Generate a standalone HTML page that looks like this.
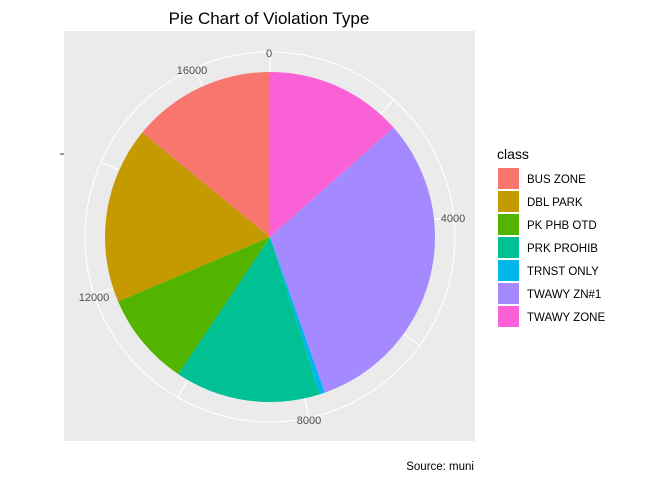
<!DOCTYPE html>
<html><head><meta charset="utf-8"><style>
body{margin:0;background:#fff;width:672px;height:480px;overflow:hidden}
svg{position:absolute;left:0;top:0}
text{font-family:"Liberation Sans",Arial,sans-serif}
</style></head><body>
<svg id="s" width="672" height="480" viewBox="0 0 672 480">
<rect x="64" y="31" width="411" height="410" fill="#ebebeb"/>
<g id="grid" stroke="#fff" fill="none" stroke-width="1.1"></g>
<g id="pie"></g>
<line x1="60" y1="154" x2="64" y2="154" stroke="#333" stroke-width="1"/>
<g font-size="11" fill="#4d4d4d" text-anchor="middle">
<text x="269" y="57">0</text>
<text x="192" y="74">16000</text>
<text x="453" y="222">4000</text>
<text x="309" y="424">8000</text>
<text x="94" y="301">12000</text>
</g>
<text x="269" y="24" font-size="17" text-anchor="middle" fill="#000">Pie Chart of Violation Type</text>
<text x="497" y="159" font-size="14" fill="#000">class</text>
<g id="leg" font-size="11.5" fill="#000"></g>
<text x="474" y="470" font-size="11.5" text-anchor="end" fill="#000">Source: muni</text>
</svg>
<script>
var cx=270,cy=237,R=165,ns="http://www.w3.org/2000/svg";
function pt(a,r){a=a*Math.PI/180;return[cx+r*Math.sin(a),cy-r*Math.cos(a)];}
var g=document.getElementById('grid');
function el(p,t,at){var e=document.createElementNS(ns,t);for(var k in at)e.setAttribute(k,at[k]);p.appendChild(e);return e;}
el(g,'circle',{cx:cx,cy:cy,r:185});
for(var i=0;i<9;i++){var a=i*2000/17150*360;var p1=pt(a,0),p2=pt(a,185);el(g,'line',{x1:p1[0],y1:p1[1],x2:p2[0],y2:p2[1]});}
var sl=[[0,48.5,'#fb61d7'],[48.5,160.6,'#a58aff'],[160.6,162.5,'#00b6eb'],[162.5,213.8,'#00c094'],[213.8,247,'#53b400'],[247,309.3,'#c49a00'],[309.3,360,'#f8766d']];
var pg=document.getElementById('pie');
sl.forEach(function(s){var a=pt(s[0],R),b=pt(s[1],R);var lg=(s[1]-s[0])>180?1:0;
el(pg,'path',{d:'M'+cx+' '+cy+'L'+a[0]+' '+a[1]+'A'+R+' '+R+' 0 '+lg+' 1 '+b[0]+' '+b[1]+'Z',fill:s[2]});});
var L=[['BUS ZONE','#f8766d'],['DBL PARK','#c49a00'],['PK PHB OTD','#53b400'],['PRK PROHIB','#00c094'],['TRNST ONLY','#00b6eb'],['TWAWY ZN#1','#a58aff'],['TWAWY ZONE','#fb61d7']];
var lg=document.getElementById('leg');
L.forEach(function(l,i){var y=168+i*23;el(lg,'rect',{x:498,y:y,width:21,height:21,fill:l[1]});var t=el(lg,'text',{x:527,y:y+15});t.textContent=l[0];});
</script>
</body></html>
